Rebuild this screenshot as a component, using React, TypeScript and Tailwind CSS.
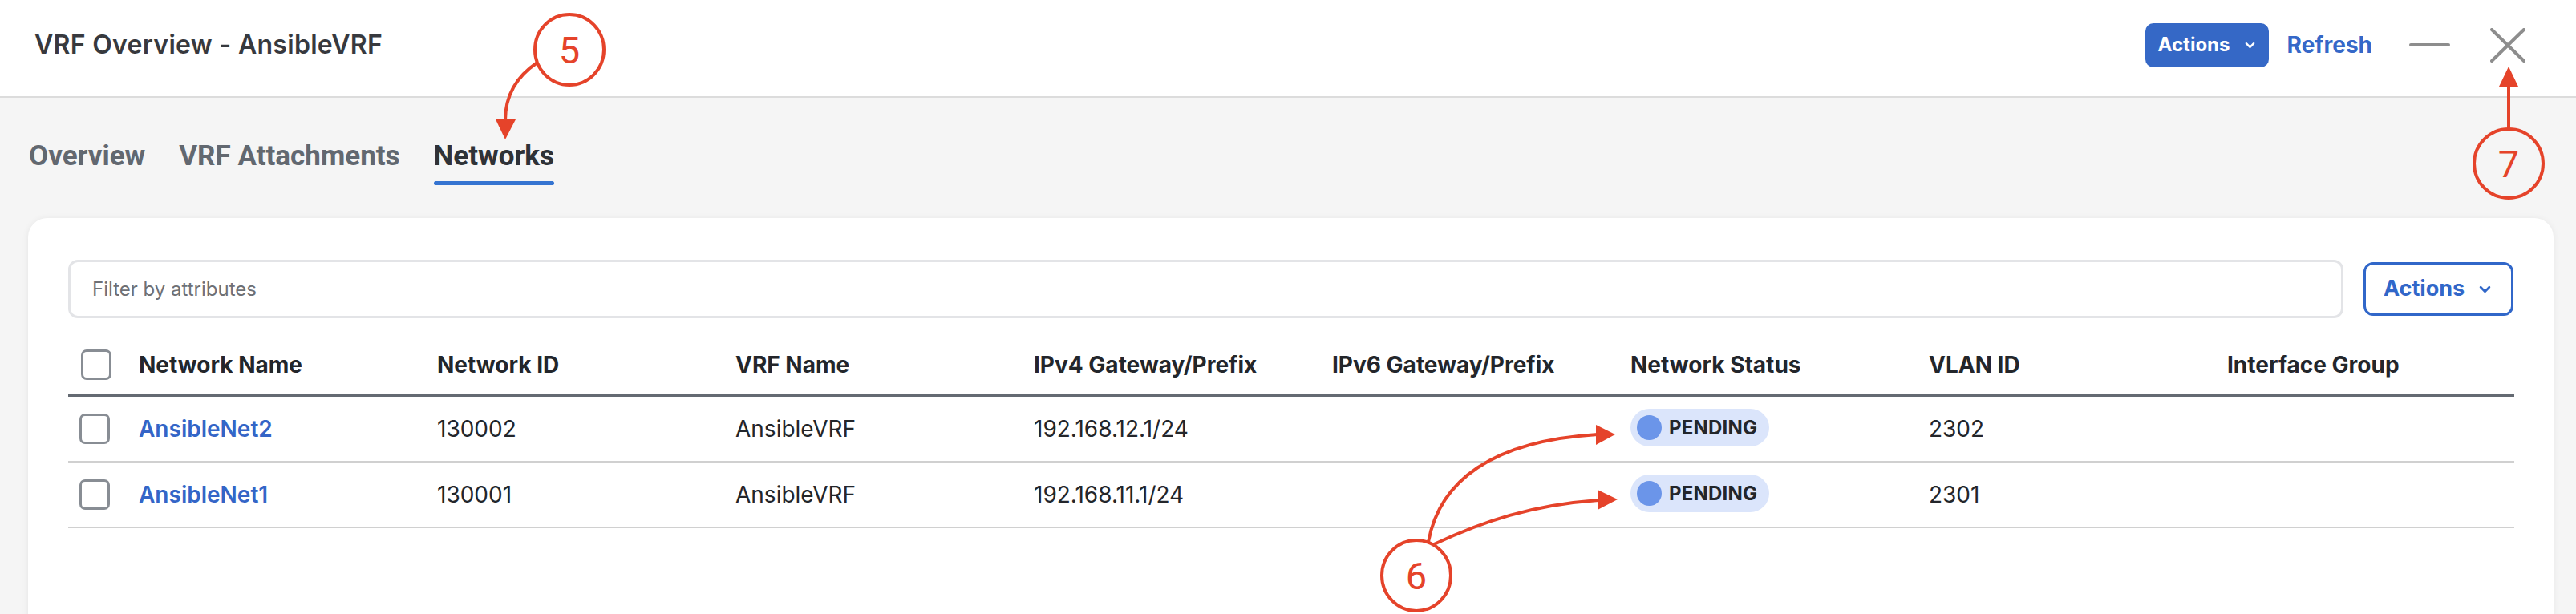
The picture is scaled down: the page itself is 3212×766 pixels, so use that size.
import React from 'react';

const COLUMNS = ['Network Name', 'Network ID', 'VRF Name', 'IPv4 Gateway/Prefix', 'IPv6 Gateway/Prefix', 'Network Status', 'VLAN ID', 'Interface Group'];

const ROWS = [
  { name: 'AnsibleNet2', id: '130002', vrf: 'AnsibleVRF', ipv4: '192.168.12.1/24', ipv6: '', status: 'PENDING', vlan: '2302', group: '' },
  { name: 'AnsibleNet1', id: '130001', vrf: 'AnsibleVRF', ipv4: '192.168.11.1/24', ipv6: '', status: 'PENDING', vlan: '2301', group: '' },
];

const TABS = [
  { label: 'Overview', active: false },
  { label: 'VRF Attachments', active: false },
  { label: 'Networks', active: true },
];

function Chevron({ className }: { className?: string }) {
  return (
    <svg viewBox="0 0 14 9" className={className} fill="none">
      <polyline points="2,2 7,7 12,2" stroke="currentColor" strokeWidth="2.6" strokeLinecap="round" strokeLinejoin="round" />
    </svg>
  );
}

function Checkbox() {
  return <div className="w-[38px] h-[38px] rounded-[7px] border-[3px] border-[#888d94] bg-white" />;
}

function StatusPill({ label }: { label: string }) {
  return (
    <div className="inline-flex items-center h-[47px] rounded-full bg-[#dbe5fb] pl-[8px] pr-[15px] gap-[9px]">
      <span className="w-[31px] h-[31px] rounded-full bg-[#6b95e9]" />
      <span className="text-[24px] font-bold text-[#23262b] tracking-[0.2px]">{label}</span>
    </div>
  );
}

function Annotations() {
  const red = '#e5432a';
  return (
    <svg className="absolute left-0 top-0 pointer-events-none" width="3212" height="766" viewBox="0 0 3212 766">
      {/* 5 */}
      <ellipse cx="710" cy="62" rx="43" ry="44" fill="none" stroke={red} strokeWidth="4" />
      <text x="710" y="79" textAnchor="middle" fontSize="47" fill={red} fontFamily="Roboto, sans-serif">5</text>
      <path d="M670 78 C 643 96, 630 120, 630 150" fill="none" stroke={red} strokeWidth="4" />
      <polygon points="618,149 643,149 630,174" fill={red} />

      {/* 7 */}
      <ellipse cx="3128" cy="204" rx="43" ry="43" fill="none" stroke={red} strokeWidth="4" />
      <text x="3128" y="221" textAnchor="middle" fontSize="47" fill={red} fontFamily="Roboto, sans-serif">7</text>
      <line x1="3128" y1="161" x2="3128" y2="106" stroke={red} strokeWidth="4" />
      <polygon points="3116,108 3140,108 3128,83" fill={red} />

      {/* 6 */}
      <ellipse cx="1766" cy="718" rx="43" ry="44" fill="none" stroke={red} strokeWidth="4" />
      <text x="1766" y="735" textAnchor="middle" fontSize="47" fill={red} fontFamily="Roboto, sans-serif">6</text>
      <path d="M1781 676 C 1795 600, 1860 550, 1992 542" fill="none" stroke={red} strokeWidth="4" />
      <polygon points="1990,530 1990,555 2014,542" fill={red} />
      <path d="M1788 679 C 1850 650, 1910 630, 1993 624" fill="none" stroke={red} strokeWidth="4" />
      <polygon points="1992,611 1992,636 2017,623" fill={red} />
    </svg>
  );
}

export default function App() {
  return (
    <div className="relative w-[3212px] h-[766px] overflow-hidden bg-[#f5f5f5] font-['Inter',sans-serif] text-[#23262b]">
      {/* Header */}
      <div className="h-[122px] bg-white border-b-2 border-[#dcdcdc] flex items-center justify-between pl-[43px] pr-[63px] pb-[8px]">
        <h1 className="text-[32px] font-semibold text-[#37393e] tracking-[0.3px]">VRF Overview - AnsibleVRF</h1>
        <div className="flex items-center">
          <button className="flex items-center h-[55px] w-[154px] rounded-[10px] bg-[#3568c6] pl-[16px] text-white">
            <span className="text-[24px] font-bold">Actions</span>
            <Chevron className="w-[13px] h-[9px] ml-[18px]" />
          </button>
          <button className="ml-[23px] text-[28px] font-bold text-[#3568c8]">Refresh</button>
          <div className="ml-[46px] w-[51px] h-[4px] rounded-full bg-[#8d8d8d]" />
          <svg className="ml-[50px] w-[44px] h-[43px]" viewBox="0 0 44 43" fill="none">
            <path d="M2 2 L42 41 M42 2 L2 41" stroke="#8d8d8d" strokeWidth="4" strokeLinecap="round" />
          </svg>
        </div>
      </div>

      {/* Tabs */}
      <div className="flex gap-[42px] pl-[36px] mt-[52px] font-['Roboto',sans-serif]">
        {TABS.map(t => (
          <div key={t.label} className="flex flex-col">
            <span className={`text-[35px] leading-[41px] font-bold ${t.active ? 'text-[#2f3237]' : 'text-[#626870]'}`}>{t.label}</span>
            <div className={`mt-[11px] h-[5px] rounded-full ${t.active ? 'bg-[#3574d1]' : 'bg-transparent'}`} />
          </div>
        ))}
      </div>

      {/* Card */}
      <div className="ml-[35px] mr-[28px] mt-[41px] h-[600px] bg-white rounded-[24px] shadow-[0_1px_8px_rgba(0,0,0,0.07)] pl-[50px] pr-[50px] pt-[52px]">
        {/* Filter row */}
        <div className="flex items-center gap-[25px]">
          <input
            className="flex-1 h-[73px] rounded-[12px] border-[3px] border-[#e3e4e7] px-[27px] text-[24px] placeholder:text-[#6e7075] outline-none"
            placeholder="Filter by attributes"
          />
          <button className="flex items-center h-[67px] w-[187px] rounded-[12px] border-[3px] border-[#3167c9] pl-[22px] text-[#3167c9]">
            <span className="text-[27px] font-bold">Actions</span>
            <Chevron className="w-[15px] h-[10px] ml-[18px]" />
          </button>
        </div>

        {/* Table */}
        <div className="mt-[22px] w-[3050px]">
          <div className="grid grid-cols-[74px_repeat(8,372px)] items-center h-[76px] border-b-4 border-[#646a72]">
            <div className="pl-[16px]"><Checkbox /></div>
            {COLUMNS.map(c => (
              <div key={c} className="pl-[14px] text-[28px] font-bold text-[#23262b]">{c}</div>
            ))}
          </div>
          {ROWS.map(r => (
            <div key={r.name} className="grid grid-cols-[74px_repeat(8,372px)] items-center h-[82px] border-b-2 border-[#d0d0d0] text-[28px]">
              <div className="pl-[14px]"><Checkbox /></div>
              <div className="pl-[14px] font-semibold text-[#3465c7]">{r.name}</div>
              <div className="pl-[14px]">{r.id}</div>
              <div className="pl-[14px]">{r.vrf}</div>
              <div className="pl-[14px]">{r.ipv4}</div>
              <div className="pl-[14px]">{r.ipv6}</div>
              <div className="pl-[14px]"><StatusPill label={r.status} /></div>
              <div className="pl-[14px]">{r.vlan}</div>
              <div className="pl-[14px]">{r.group}</div>
            </div>
          ))}
        </div>
      </div>

      <Annotations />
    </div>
  );
}
